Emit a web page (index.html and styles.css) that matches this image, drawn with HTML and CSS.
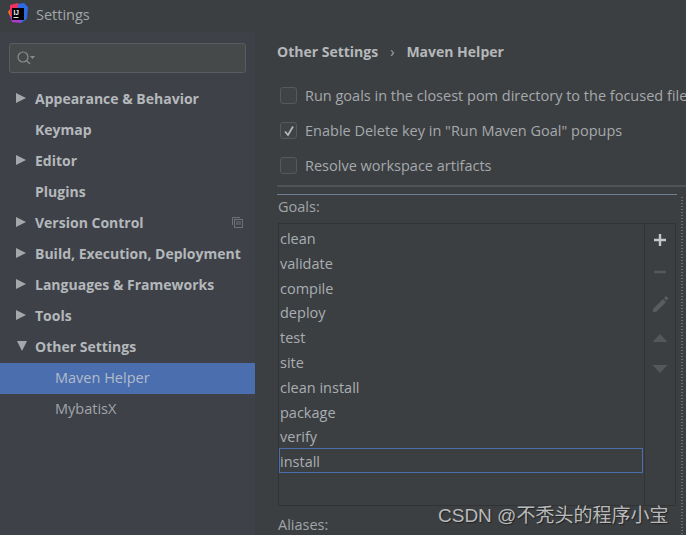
FILE: index.html
```html
<!DOCTYPE html>
<html lang="en">
<head>
<meta charset="utf-8">
<title>Settings</title>
<link rel="stylesheet" href="styles.css">
</head>
<body>
<div class="window">
  <header class="titlebar">
    <svg class="logo" width="20" height="20" viewBox="0 0 20 20">
      <path d="M0 9 L3 5 L5 11 L3 15 Z" fill="#f97a12"/>
      <path d="M2 2 L10 0 L12 4 L4 16 L2 10 Z" fill="#f0305f"/>
      <path d="M10 1 L16 0 L20 4 L19 16 L13 20 L9 12 Z" fill="#2f6be0"/>
      <path d="M2 13 L12 12 L13 20 L4 19 Z" fill="#b03ad0"/>
      <rect x="4" y="5" width="12" height="12" fill="#000"/>
      <rect x="5.5" y="14" width="5" height="1" fill="#ddd"/>
      <text x="5.5" y="11.5" class="logo-text">IJ</text>
    </svg>
    <span class="title">Settings</span>
  </header>
  <div class="body">
    <aside class="sidebar">
      <div class="search">
        <svg width="20" height="16" viewBox="0 0 20 16">
          <circle cx="7" cy="7" r="5" fill="none" stroke="#8a8d8f" stroke-width="1.2"/>
          <path d="M10.5 10.5 L14 14" stroke="#8a8d8f" stroke-width="1.3"/>
          <path d="M14 6 L19 6 L16.5 9 Z" fill="#8a8d8f"/>
        </svg>
      </div>
      <nav class="tree">
        <div class="row"><i class="arrow"></i><span>Appearance &amp; Behavior</span></div>
        <div class="row"><i class="spacer"></i><span>Keymap</span></div>
        <div class="row"><i class="arrow"></i><span>Editor</span></div>
        <div class="row"><i class="spacer"></i><span>Plugins</span></div>
        <div class="row"><i class="arrow"></i><span>Version Control</span>
          <svg class="copy" width="13" height="13" viewBox="0 0 13 13">
            <path d="M1.5 9 V1.5 H9" fill="none" stroke="#6f7274"/>
            <rect x="3.5" y="3.5" width="8" height="8" fill="none" stroke="#6f7274"/>
            <path d="M5 6 H10 M5 8 H10" stroke="#6f7274"/>
          </svg>
        </div>
        <div class="row"><i class="arrow"></i><span>Build, Execution, Deployment</span></div>
        <div class="row"><i class="arrow"></i><span>Languages &amp; Frameworks</span></div>
        <div class="row"><i class="arrow"></i><span>Tools</span></div>
        <div class="row"><i class="arrow down"></i><span>Other Settings</span></div>
        <div class="row child selected"><span>Maven Helper</span></div>
        <div class="row child"><span>MybatisX</span></div>
      </nav>
    </aside>
    <main class="content">
      <div class="crumbs"><b>Other Settings</b><span class="sep">›</span><b>Maven Helper</b></div>
      <div class="options">
        <label class="check"><i class="box"></i>Run goals in the closest pom directory to the focused file</label>
        <label class="check"><i class="box"><svg width="14" height="14" viewBox="0 0 14 14"><path d="M3 7.5 L6 11 L11 2.5" fill="none" stroke="#b4b7b9" stroke-width="1.8"/></svg></i>Enable Delete key in "Run Maven Goal" popups</label>
        <label class="check"><i class="box"></i>Resolve workspace artifacts</label>
      </div>
      <div class="rule-thick"></div>
      <div class="panel">
        <div class="panel-main">
          <div class="rule-thin"></div>
          <div class="field-label">Goals:</div>
          <div class="goals">
            <ul class="list">
              <li>clean</li>
              <li>validate</li>
              <li>compile</li>
              <li>deploy</li>
              <li>test</li>
              <li>site</li>
              <li>clean install</li>
              <li>package</li>
              <li>verify</li>
              <li class="focused">install</li>
            </ul>
            <div class="tools">
              <svg class="t-plus" width="14" height="14" viewBox="0 0 14 14"><path d="M7 1 V13 M1 7 H13" stroke="#c4c6c8" stroke-width="2.4"/></svg>
              <svg class="t-minus" width="14" height="14" viewBox="0 0 14 14"><path d="M1 7 H13" stroke="#55585a" stroke-width="2.4"/></svg>
              <svg class="t-pen" width="18" height="18" viewBox="0 0 18 18"><path d="M2 14 L12 4 L15 7 L5 17 L2 17 Z M13 3 L15 1 L17.5 3.5 L15.5 5.5 Z" fill="#5a5d5f"/></svg>
              <svg class="t-up" width="16" height="10" viewBox="0 0 16 10"><path d="M8 1 L15.5 9 H0.5 Z" fill="#55585a"/></svg>
              <svg class="t-down" width="16" height="10" viewBox="0 0 16 10"><path d="M8 9 L15.5 1 H0.5 Z" fill="#55585a"/></svg>
            </div>
          </div>
          <div class="field-label aliases">Aliases:</div>
        </div>
        <div class="splitter"></div>
      </div>
    </main>
  </div>
  <div class="watermark">CSDN @不秃头的程序小宝</div>
</div>
</body>
</html>
```
FILE: styles.css
```css
* { box-sizing: border-box; }
html, body { margin: 0; padding: 0; }
body { width: 686px; height: 535px; overflow: hidden; background: #3c3f41; font-family: "Open Sans", "Noto Sans", sans-serif; font-size: 14.5px; color: #a9aeb3; }
.window { position: relative; width: 686px; height: 535px; display: flex; flex-direction: column; overflow: hidden; }
.titlebar { height: 32px; flex: none; display: flex; align-items: center; padding-left: 8px; gap: 8px; background: #3c3f41; }
.logo { flex: none; margin-top: -6px; }
.logo-text { font-family: "Liberation Sans", sans-serif; font-size: 6.5px; font-weight: 700; fill: #fff; }
.title { font-size: 14.5px; color: #a2a6a9; margin-top: -3px; }
.body { flex: 1; display: flex; min-height: 0; }
.sidebar { width: 255px; flex: none; background: #3e4148; padding-top: 11px; }
.search { margin: 0 9px; height: 30px; background: #45494a; border: 1px solid #5a5d5f; border-radius: 3px; display: flex; align-items: center; padding-left: 6px; }
.tree { margin-top: 11px; }
.row { height: 31px; padding-bottom: 2px; display: flex; align-items: center; font-weight: 700; font-size: 14px; color: #b4b8bb; padding-left: 16px; position: relative; }
.arrow { width: 0; height: 0; border-left: 10px solid #a5a8aa; border-top: 5.5px solid transparent; border-bottom: 5.5px solid transparent; margin-right: 9px; margin-top: -1px; flex: none; }
.arrow.down { border-left: 5.5px solid transparent; border-right: 5.5px solid transparent; border-top: 10px solid #a5a8aa; border-bottom: 0; margin-right: 8px; margin-left: 1px; }
.spacer { width: 19px; flex: none; }
.copy { margin-left: auto; margin-right: 11px; }
.row.child { font-weight: 400; font-size: 14.5px; padding-left: 55px; color: #a0a5aa; }
.row.selected { background: #4b6eaf; color: #b0bccb; }
.content { flex: 1; min-width: 0; padding: 0 0 0 22px; overflow: hidden; background: #3c3f41; }
.crumbs { height: 38px; display: flex; align-items: center; font-weight: 700; font-size: 14px; color: #b4b8bb; white-space: nowrap; }
.crumbs b { font-weight: 700; }
.sep { font-weight: 400; margin: 0 12px; color: #a5a8aa; }
.options { margin-top: 8px; display: flex; flex-direction: column; margin-left: 3px; }
.check { height: 35px; display: flex; align-items: center; gap: 8px; white-space: nowrap; color: #a5a9ad; }
.box { width: 17px; height: 17px; flex: none; background: #404345; border: 1px solid #56595b; border-radius: 3px; display: flex; align-items: center; justify-content: center; }
.rule-thick { height: 2px; background: #505254; margin-top: 2px; }
.panel { display: flex; margin-top: 7px; }
.panel-main { width: 400px; flex: none; }
.splitter { width: 2px; margin-left: 4px; margin-top: 3px; height: 340px; background-image: linear-gradient(#6a6d6f 50%, transparent 50%); background-size: 2px 3px; }
.rule-thin { height: 1px; width: 400px; background: #6e7f92; }
.field-label { height: 28px; line-height: 24px; color: #a0a4a8; padding-left: 1px; }
.goals { width: 398px; height: 283px; margin-left: 1px; display: flex; border: 1px solid #313335; }
.list { list-style: none; margin: 0; padding: 3px 0 0 0; flex: 1; min-width: 0; border-right: 1px solid #313335; }
.list li { height: 24.8px; line-height: 24.8px; padding-left: 1px; color: #a9aeb3; }
.list li.focused { border: 1px solid #4b6eaf; margin-top: -2px; margin-right: 1px; height: 25px; line-height: 25px; padding-left: 0; }
.tools { width: 30px; flex: none; display: flex; flex-direction: column; align-items: center; padding-top: 9px; }
.t-minus { margin-top: 18px; }
.t-pen { margin-top: 16px; }
.t-up { margin-top: 20px; }
.t-down { margin-top: 21px; }
.aliases { margin-top: 7px; }
.watermark { position: absolute; left: 438px; top: 500px; font-family: "Liberation Sans", "Noto Sans CJK SC", sans-serif; font-size: 19px; color: #b8babb; text-shadow: 1px 1px 1px #222; white-space: nowrap; }
```
